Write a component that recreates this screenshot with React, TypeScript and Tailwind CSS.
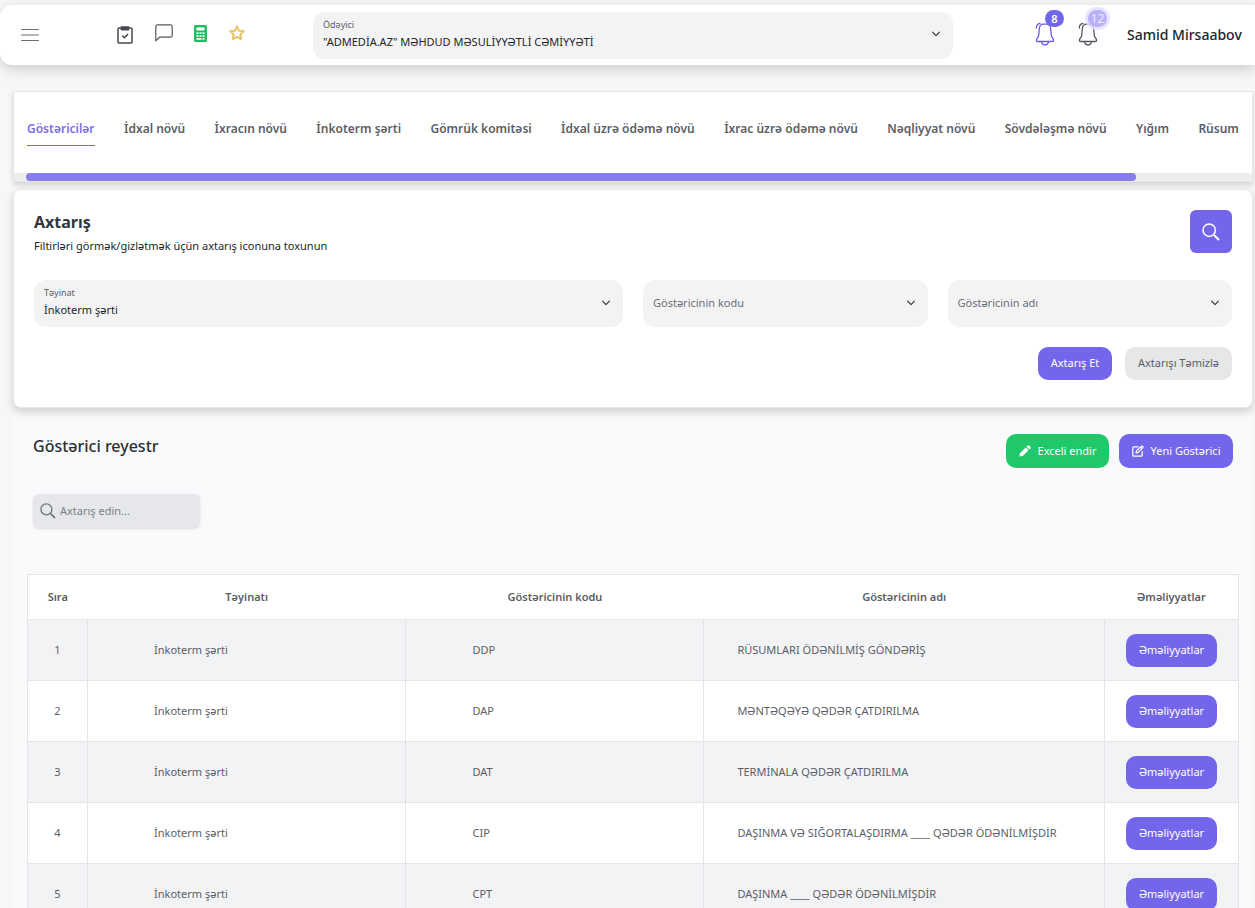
import React, { useId, useState } from "react";

type IconProps = { className?: string };

const MenuIcon = ({ className }: IconProps) => (
  <svg viewBox="0 0 18 14" className={className} fill="none" stroke="currentColor" strokeWidth="1.2" strokeLinecap="round" aria-hidden="true">
    <path d="M.6 1.500h16.800M.6 7h16.800M.6 12.500h16.800" />
  </svg>
);

const ClipboardIcon = ({ className }: IconProps) => (
  <svg viewBox="0 0 16 18" className={className} fill="none" stroke="currentColor" strokeWidth="1.5" strokeLinejoin="round" strokeLinecap="round" aria-hidden="true">
    <rect x="1" y="2" width="14" height="15" rx="1" />
    <rect x="4.400" y="1" width="7.200" height="2.800" fill="currentColor" />
    <path d="M5.600 10l1.800 1.800 3.200-3.400" />
  </svg>
);

const ChatIcon = ({ className }: IconProps) => (
  <svg viewBox="0 0 18 18" className={className} fill="none" stroke="currentColor" strokeWidth="1.2" strokeLinejoin="round" aria-hidden="true">
    <path d="M.8 16.800V2.600C.8 1.600 1.600.8 2.600.8h12.800c1 0 1.800.8 1.800 1.800v8.800c0 1-.8 1.800-1.800 1.800H4.600z" />
  </svg>
);

const CalculatorIcon = ({ className }: IconProps) => (
  <svg viewBox="0 0 13 17" className={className} aria-hidden="true">
    <rect width="13" height="17" rx="1.5" fill="#1fbf5f" />
    <rect x="2.500" y="2.500" width="8" height="3" fill="#fff" />
    <g fill="#fff">
      <rect x="2.500" y="7.300" width="2" height="1.700" />
      <rect x="5.500" y="7.300" width="2" height="1.700" />
      <rect x="8.500" y="7.300" width="2" height="1.700" />
      <rect x="2.500" y="10.200" width="2" height="1.700" />
      <rect x="5.500" y="10.200" width="2" height="1.700" />
      <rect x="8.500" y="10.200" width="2" height="1.700" />
      <rect x="2.500" y="13.100" width="5" height="1.700" />
      <rect x="8.500" y="13.100" width="2" height="1.700" />
    </g>
  </svg>
);

const StarIcon = ({ className }: IconProps) => (
  <svg viewBox="0 0 24 24" className={className} fill="none" stroke="currentColor" strokeWidth="3" strokeLinejoin="round" aria-hidden="true">
    <path d="M12 2.200l3 6.300 7 1-5 4.800 1.200 6.900-6.200-3.300-6.200 3.300L7 14.300 2 9.500l7-1z" />
  </svg>
);

const BellIcon = ({ className }: IconProps) => (
  <svg viewBox="0 0 20 24" className={className} fill="none" stroke="currentColor" strokeWidth="1.300" strokeLinecap="round" strokeLinejoin="round" aria-hidden="true">
    <path d="M4.400 6.200C4.700 3.600 6.200 2.200 8.500 2.200h3c2.300 0 3.800 1.400 4.100 4l.8 7.600c.2 1.500 2.200 2.900 2.200 4.400 0 .8-.6 1.300-1.400 1.300H2.800c-.8 0-1.400-.5-1.400-1.300 0-1.500 2-2.900 2.200-4.400z" />
    <path d="M6.600 20c.3 1.900 1.600 3 3.400 3s3.100-1.100 3.400-3" />
    <path d="M1.300 6C1.400 3.600 2.800 1.700 5 1.400" />
  </svg>
);

const SearchIcon = ({ className }: IconProps) => (
  <svg viewBox="0 0 18 18" className={className} fill="none" stroke="currentColor" strokeWidth="1.500" aria-hidden="true">
    <circle cx="7.200" cy="7.200" r="6.200" />
    <path d="M12 12l5 5" strokeWidth="1.900" />
  </svg>
);

const ChevronIcon = ({ className }: IconProps) => (
  <svg viewBox="0 0 10 6" className={className} fill="none" stroke="currentColor" strokeWidth="1.200" strokeLinecap="round" strokeLinejoin="round" aria-hidden="true">
    <path d="M1.600 1.200L5 4.600l3.400-3.400" />
  </svg>
);

const PencilIcon = ({ className }: IconProps) => (
  <svg viewBox="0 0 12 12" className={className} fill="currentColor" aria-hidden="true">
    <path d="M.4 11.600l.5-3.300 5.900-5.900 2.800 2.800-5.900 5.900zM7.500 1.700l1-1c.5-.5 1.200-.5 1.700 0l1.100 1.100c.5.500.5 1.200 0 1.700l-1 1z" />
  </svg>
);

const EditIcon = ({ className }: IconProps) => (
  <svg viewBox="0 0 12 12" className={className} fill="none" stroke="currentColor" strokeWidth="1.200" strokeLinejoin="round" strokeLinecap="round" aria-hidden="true">
    <path d="M6 1.800H1.700c-.5 0-.9.400-.9.900v7.600c0 .5.400.9.900.9h7.600c.5 0 .9-.4.900-.9V6.500" />
    <path d="M4 8l.4-2L9.300 1.100c.3-.3.800-.3 1.100 0l.5.500c.3.300.3.800 0 1.100L6 7.600zM8.500 2l1.500 1.500" />
  </svg>
);

function SelectField({ label, options, filled, className = "" }: { label: string; options: string[]; filled?: boolean; className?: string }) {
  const id = useId();
  return (
    <div className={`grid h-[47px] min-w-0 rounded-xl bg-[#f3f3f4] ${className}`}>
      {filled && (
        <label htmlFor={id} className="pointer-events-none z-10 col-start-1 row-start-1 self-start px-2.5 pt-1.5 text-[9px] leading-[14px] text-[#5d6068]">
          {label}
        </label>
      )}
      <select
        id={id}
        aria-label={filled ? undefined : label}
        className={`col-start-1 row-start-1 w-full min-w-0 appearance-none bg-transparent px-2.5 pr-8 text-[11px] outline-none ${filled ? "pt-3.5 text-[#212529]" : "text-[#6b6e76]"}`}
      >
        {options.map((o) => (
          <option key={o}>{o}</option>
        ))}
      </select>
      <ChevronIcon className="pointer-events-none col-start-1 row-start-1 mr-3 mb-0.5 h-1.5 w-2.5 self-center justify-self-end text-[#33373c]" />
    </div>
  );
}

const tabs = [
  "Göstəricilər",
  "İdxal növü",
  "İxracın növü",
  "İnkoterm şərti",
  "Gömrük komitəsi",
  "İdxal üzrə ödəmə növü",
  "İxrac üzrə ödəmə növü",
  "Nəqliyyat növü",
  "Sövdələşmə növü",
  "Yığım",
  "Rüsum",
];

const rows = [
  { code: "DDP", name: "RÜSUMLARI ÖDƏNİLMİŞ GÖNDƏRİŞ" },
  { code: "DAP", name: "MƏNTƏQƏYƏ QƏDƏR ÇATDIRILMA" },
  { code: "DAT", name: "TERMİNALA QƏDƏR ÇATDIRILMA" },
  { code: "CIP", name: "DAŞINMA VƏ SIĞORTALAŞDIRMA ____ QƏDƏR ÖDƏNİLMİŞDİR" },
  { code: "CPT", name: "DAŞINMA ____ QƏDƏR ÖDƏNİLMİŞDİR" },
];

function Header() {
  return (
    <header className="mt-[5px] flex h-[60px] items-center rounded-l-xl bg-white pr-2 pl-[21px] shadow-[0_4px_14px_rgba(0,0,0,0.18)]">
      <button type="button" aria-label="Menyu" className="text-[#6a6d73]">
        <MenuIcon className="h-3.5 w-[18px]" />
      </button>
      <nav aria-label="Qısayollar" className="ml-[78px] flex w-32 items-center justify-between">
        <button type="button" aria-label="Tapşırıqlar" className="text-[#45484f]"><ClipboardIcon className="h-[18px] w-4" /></button>
        <button type="button" aria-label="Mesajlar" className="pb-1 text-[#55585f]"><ChatIcon className="h-[18px] w-[18px]" /></button>
        <button type="button" aria-label="Kalkulyator" className="pb-1"><CalculatorIcon className="h-[17px] w-[13px]" /></button>
        <button type="button" aria-label="Seçilmişlər" className="pb-1 text-[#e5c565]"><StarIcon className="h-4 w-4" /></button>
      </nav>
      <SelectField label="Ödəyici" filled options={['"ADMEDİA.AZ" MƏHDUD MƏSULİYYƏTLİ CƏMİYYƏTİ']} className="mr-[82px] ml-[68px] flex-1" />
      <div className="flex items-center gap-[23px] pb-0.5">
        <button type="button" aria-label="Bildirişlər" className="relative text-[#6a5ce8]">
          <BellIcon className="h-6 w-5" />
          <span className="absolute -top-3 left-2.5 flex h-[17px] w-[19px] items-center justify-center rounded-full bg-[#7166e8] text-[11px] leading-none font-semibold text-white">8</span>
        </button>
        <button type="button" aria-label="Xəbərdarlıqlar" className="relative text-[#55585f]">
          <BellIcon className="h-6 w-5" />
          <span className="absolute -top-3 left-2.5 flex h-[17px] w-[19px] items-center justify-center rounded-full bg-[#b9b1f7] text-[12px] leading-none text-[#ebe8fe] ring-[3px] ring-[#e3dffc]/80">12</span>
        </button>
      </div>
      <p className="ml-[29px] min-w-[120px] pb-0.5 text-[14px] font-medium whitespace-nowrap text-[#212529]">Samid Mirsaabov</p>
    </header>
  );
}

export default function App() {
  const [active, setActive] = useState(0);
  return (
    <div className="flow-root min-h-screen overflow-hidden bg-[#f7f7f7] font-['Noto_Sans','Open_Sans',sans-serif] text-[11px] text-[#5b5e66]">
      <Header />
      <main className="mt-[26px] mr-0.5 ml-[13px]">
        <nav aria-label="Bölmələr" className="border border-[#e6e6e8] bg-white shadow-[0_3px_5px_rgba(0,0,0,0.14)]">
          <div className="flex h-[81px] items-start justify-between px-[13px] pt-6">
            {tabs.map((t, i) => (
              <button
                key={t}
                type="button"
                onClick={() => setActive(i)}
                className={`h-[30px] border-b pb-1 text-[12px] font-semibold whitespace-nowrap ${i === active ? "border-b-[#7466ea] text-[#7a6eea]" : "border-b-transparent"}`}
              >
                {t}
              </button>
            ))}
          </div>
          <div className="h-2 bg-[#eeeeef] pl-3">
            <div className="h-full w-[90.500%] rounded-full bg-[#887dea]" />
          </div>
        </nav>

        <section className="relative mt-[7px] rounded-lg border border-[#e8e8ea] bg-white px-5 pt-5 pb-[27px] shadow-[0_4px_10px_rgba(0,0,0,0.16)]">
          <div className="flex items-start justify-between">
            <div>
              <h2 className="text-[16px] leading-6 font-bold text-[#33363c]">Axtarış</h2>
              <p className="leading-6 text-[#212529]">Filtirləri görmək/gizlətmək üçün axtarış iconuna toxunun</p>
            </div>
            <button type="button" aria-label="Axtarış" className="flex h-[43px] w-[42px] items-center justify-center rounded-md bg-[#7466ea] text-white">
              <SearchIcon className="h-[18px] w-[18px]" />
            </button>
          </div>
          <form onSubmit={(e) => e.preventDefault()} className="pt-[22px]">
            <div className="grid grid-cols-4 gap-5">
              <SelectField label="Təyinat" filled options={["İnkoterm şərti"]} className="col-span-2" />
              <SelectField label="Göstəricinin kodu" options={["Göstəricinin kodu"]} />
              <SelectField label="Göstəricinin adı" options={["Göstəricinin adı"]} />
            </div>
            <div className="mt-5 flex justify-end gap-[13px]">
              <button type="submit" className="h-[33px] w-[74px] rounded-[10px] bg-[#7466ea] whitespace-nowrap text-white">Axtarış Et</button>
              <button type="reset" className="h-[33px] w-[107px] rounded-[10px] bg-[#e6e7e9] whitespace-nowrap">Axtarışı Təmizlə</button>
            </div>
          </form>
        </section>

        <section className="mt-1.5 bg-[#f9fafc] px-3.5 pb-6">
          <div className="flex items-start justify-between px-1.5 pt-5">
            <h2 className="text-[16px] leading-6 font-medium text-[#2c2f35]">Göstərici reyestr</h2>
            <div className="flex gap-2.5">
              <button type="button" className="flex h-[34px] w-[103px] items-center justify-center gap-[7px] rounded-[10px] bg-[#1fc868] whitespace-nowrap text-white">
                <PencilIcon className="h-3 w-3" />
                Exceli endir
              </button>
              <button type="button" className="flex h-[34px] w-[114px] items-center justify-center gap-[7px] rounded-[10px] bg-[#7466ea] whitespace-nowrap text-white">
                <EditIcon className="h-3 w-3" />
                Yeni Göstərici
              </button>
            </div>
          </div>
          <div className="mt-[26px] ml-1.5 flex h-[34px] w-[167px] items-center gap-1 rounded-md bg-[#e6e7ea] px-[7px] text-[#74777e] shadow-sm">
            <SearchIcon className="h-4 w-4 shrink-0" />
            <input type="text" aria-label="Axtarış edin" placeholder="Axtarış edin..." className="w-full min-w-0 bg-transparent outline-none placeholder:text-[#7c7f86]" />
          </div>
          <table className="mt-[46px] w-full table-fixed border-collapse border border-[#e4e5e8] bg-white">
            <colgroup>
              <col className="w-[60px]" />
              <col className="w-[26.300%]" />
              <col className="w-[24.600%]" />
              <col />
              <col className="w-[134px]" />
            </colgroup>
            <thead>
              <tr className="h-[45px] border-b border-[#e4e5e8]">
                {["Sıra", "Təyinatı", "Göstəricinin kodu", "Göstəricinin adı", "Əməliyyatlar"].map((h) => (
                  <th key={h} scope="col" className="text-center font-semibold whitespace-nowrap">{h}</th>
                ))}
              </tr>
            </thead>
            <tbody>
              {rows.map((r, i) => (
                <tr key={r.code} className="h-[61px] divide-x divide-[#e4e5e8] border-b border-[#e4e5e8] odd:bg-[#f2f3f5]">
                  <td className="text-center">{i + 1}</td>
                  <td className="pl-[66px]">İnkoterm şərti</td>
                  <td className="pl-[66px]">{r.code}</td>
                  <td className="pl-[33px] whitespace-nowrap">{r.name}</td>
                  <td className="text-center">
                    <button type="button" className="h-[33px] w-[91px] rounded-[10px] bg-[#7466ea] whitespace-nowrap text-white">Əməliyyatlar</button>
                  </td>
                </tr>
              ))}
            </tbody>
          </table>
        </section>
      </main>
    </div>
  );
}
